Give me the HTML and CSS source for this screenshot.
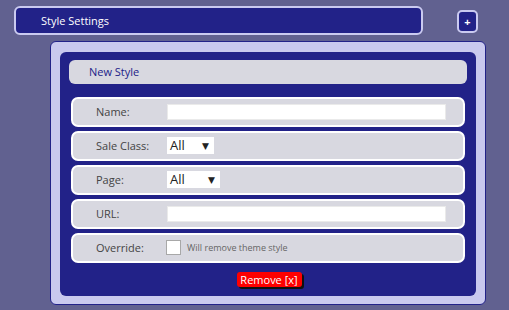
FILE: index.html
```html
<!DOCTYPE html>
<html>
<head>
<meta charset="utf-8">
<link rel="stylesheet" href="styles.css">
</head>
<body>
<div class="topline">
  <div class="titlebar">Style Settings</div>
  <button class="plus">+</button>
</div>
<div class="outer">
  <div class="inner">
    <div class="header">New Style</div>
    <div class="rows">
      <div class="row"><span class="label">Name:</span><span class="input"></span></div>
      <div class="row"><span class="label">Sale Class:</span><span class="select">All<span class="arrow">▼</span></span></div>
      <div class="row"><span class="label">Page:</span><span class="select wide">All<span class="arrow">▼</span></span></div>
      <div class="row"><span class="label">URL:</span><span class="input"></span></div>
      <div class="row"><span class="label">Override:</span><span class="check"></span><span class="note">Will remove theme style</span></div>
    </div>
    <div class="actions"><button class="remove">Remove [x]</button></div>
  </div>
</div>
</body>
</html>
```
FILE: styles.css
```css
body {
  margin: 0;
  background: #616190;
  font-family: "Open Sans", "DejaVu Sans", sans-serif;
}
.topline {
  display: flex;
  align-items: center;
  padding: 6px 0 0 14px;
  gap: 34px;
}
.titlebar {
  box-sizing: border-box;
  width: 409px;
  height: 29px;
  background: #222288;
  border: 2px solid #cacaf0;
  border-radius: 6px;
  color: #fff;
  font-size: 11px;
  line-height: 25px;
  padding-left: 25px;
}
.plus {
  box-sizing: border-box;
  width: 21px;
  height: 23px;
  padding: 0;
  background: #222288;
  border: 2px solid #cacaf0;
  border-radius: 5px;
  color: #fff;
  font-family: inherit;
  font-size: 11px;
  font-weight: bold;
  line-height: 17px;
  margin-top: 1px;
}
.outer {
  box-sizing: border-box;
  margin: 6px 0 0 50px;
  width: 436px;
  height: 264px;
  background: #c9c9ee;
  border: 1px solid #222288;
  border-radius: 6px;
  padding: 10px 9px 8px 9px;
}
.inner {
  box-sizing: border-box;
  height: 244px;
  background: #222288;
  border-radius: 6px;
  padding: 8px 9px 0 9px;
}
.header {
  height: 24px;
  background: #d8d8e0;
  border-radius: 6px;
  color: #222288;
  font-size: 11px;
  line-height: 24px;
  padding-left: 20px;
}
.rows {
  display: flex;
  flex-direction: column;
  gap: 4px;
  margin: 13px 2px 0 2px;
}
.row {
  box-sizing: border-box;
  height: 30px;
  background: #d8d8e0;
  border: 2px solid #ffffff;
  border-radius: 7px;
  display: flex;
  align-items: center;
  padding-left: 23px;
  padding-bottom: 1px;
}
.label {
  width: 71px;
  flex: none;
  font-size: 11px;
  color: #444;
}
.input {
  width: 279px;
  height: 16px;
  background: #fff;
  border: 1px solid #eaeaea;
  box-sizing: border-box;
}
.select {
  box-sizing: border-box;
  width: 47px;
  height: 17px;
  background: #fff;
  color: #222;
  font-size: 13px;
  line-height: 17px;
  padding-left: 3px;
  display: flex;
  justify-content: space-between;
}
.select.wide { width: 53px; }
.arrow {
  font-size: 9px;
  padding-right: 5px;
  line-height: 17px;
}
.check {
  box-sizing: border-box;
  width: 15px;
  height: 15px;
  background: #fff;
  border: 1px solid #a8a8a8;
  margin-left: -1px;
}
.note {
  font-size: 9px;
  color: #666;
  margin-left: 6px;
}
.actions {
  display: flex;
  justify-content: center;
  margin-top: 9px;
}
.remove {
  background: #ff0000;
  color: #fff;
  border: none;
  border-radius: 3px;
  font-family: inherit;
  font-size: 11px;
  height: 15px;
  width: 65px;
  padding: 0;
  line-height: 15px;
  box-shadow: 2px 2px 0 #111;
  margin-left: 2px;
}
```
